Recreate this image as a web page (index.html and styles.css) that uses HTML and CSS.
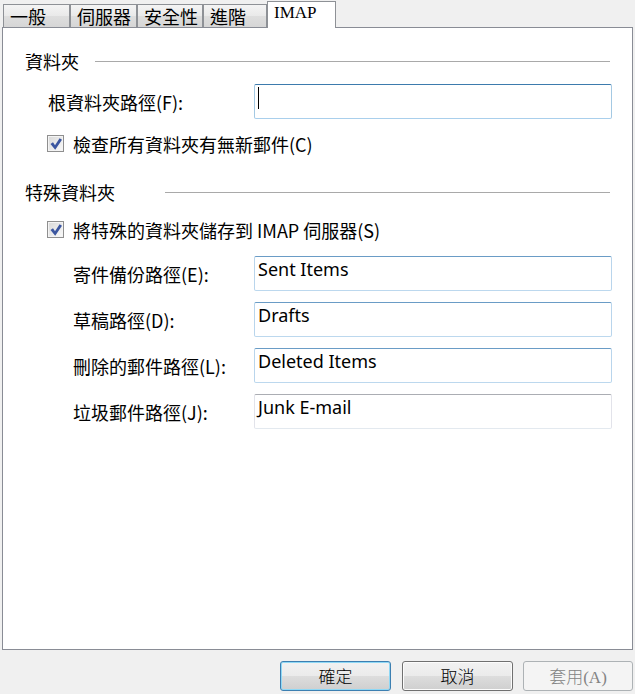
FILE: index.html
```html
<!DOCTYPE html>
<html lang="zh-Hant">
<head>
<meta charset="utf-8">
<title>IMAP</title>
<link rel="stylesheet" href="styles.css">
</head>
<body>
<div class="window">
  <div class="tabs">
    <div class="tab tab-1">一般</div>
    <div class="tab tab-2">伺服器</div>
    <div class="tab tab-3">安全性</div>
    <div class="tab tab-4">進階</div>
    <div class="tab tab-active">IMAP</div>
  </div>
  <div class="panel">
    <div class="group-head group-1"><span>資料夾</span><i class="rule"></i></div>
    <div class="field field-root">
      <span class="label">根資料夾路徑(F):</span>
      <div class="textbox focus"><span class="caret"></span></div>
    </div>
    <div class="check check-1">
      <span class="box"><svg width="14" height="14" viewBox="0 0 14 14"><path d="M1.5 7 L4 5.3 L6 8.3 L10.6 1.2 L13 2.8 L6.2 12.8 Z" fill="#3b56a0"/></svg></span>
      <span class="check-text">檢查所有資料夾有無新郵件(C)</span>
    </div>
    <div class="group-head group-2"><span>特殊資料夾</span><i class="rule"></i></div>
    <div class="check check-2">
      <span class="box"><svg width="14" height="14" viewBox="0 0 14 14"><path d="M1.5 7 L4 5.3 L6 8.3 L10.6 1.2 L13 2.8 L6.2 12.8 Z" fill="#3b56a0"/></svg></span>
      <span class="check-text">將特殊的資料夾儲存到 IMAP 伺服器(S)</span>
    </div>
    <div class="sub-fields">
      <div class="field sub">
        <span class="label">寄件備份路徑(E):</span>
        <div class="textbox hot">Sent Items</div>
      </div>
      <div class="field sub">
        <span class="label">草稿路徑(D):</span>
        <div class="textbox hot">Drafts</div>
      </div>
      <div class="field sub">
        <span class="label">刪除的郵件路徑(L):</span>
        <div class="textbox hot">Deleted Items</div>
      </div>
      <div class="field sub">
        <span class="label">垃圾郵件路徑(J):</span>
        <div class="textbox">Junk E-mail</div>
      </div>
    </div>
  </div>
  <div class="buttons">
    <div class="btn btn-default">確定</div>
    <div class="btn btn-cancel">取消</div>
    <div class="btn btn-disabled">套用<span class="latin">(A)</span></div>
  </div>
</div>
</body>
</html>
```
FILE: styles.css
```css
html, body {
  margin: 0;
  padding: 0;
}
body {
  background: #f0f0f0;
  font-family: "Noto Sans CJK TC", "Noto Sans", sans-serif;
  color: #000;
  width: 635px;
  height: 694px;
  overflow: hidden;
}
.window {
  width: 635px;
  height: 694px;
}

/* Tabs */
.tabs {
  display: flex;
  align-items: flex-end;
  height: 27px;
  padding-left: 3px;
}
.tab {
  box-sizing: border-box;
  height: 23px;
  border: 1px solid #8e9196;
  border-bottom: none;
  background: linear-gradient(#f4f4f4, #e9e9e9 50%, #dedede 51%, #d6d6d6);
  font-size: 18px;
  line-height: 20px;
  padding: 1px 0 0 6px;
  white-space: nowrap;
}
.tab-1 { width: 67px; }
.tab-2 { width: 67px; }
.tab-3 { width: 66px; }
.tab-4 { width: 64px; }
.tab-active {
  width: 69px;
  height: 27px;
  margin-bottom: -1px;
  background: #fff;
  position: relative;
  z-index: 1;
  font-family: "Liberation Serif", serif;
  font-size: 17px;
  line-height: 18px;
  padding: 2px 0 0 6px;
}

/* Panel */
.panel {
  box-sizing: border-box;
  width: 631px;
  height: 623px;
  margin-left: 2px;
  border: 1px solid #898c95;
  background: #fff;
  padding: 0 19px 0 22px;
  font-size: 18px;
}
.group-head {
  display: flex;
  align-items: center;
  height: 24px;
  line-height: 24px;
}
.group-1 { margin-top: 21px; }
.group-2 { margin-top: 24px; }
.rule {
  flex: 1;
  height: 1px;
  background: #a9a9a9;
  margin-right: 3px;
}
.group-1 .rule { margin-left: 16px; }
.group-2 .rule { margin-left: 50px; }

.field {
  display: flex;
  align-items: center;
  height: 35px;
}
.field-root { margin-top: 11px; }
.field-root .label {
  margin-left: 23px;
  width: 206px;
}
.sub-fields {
  margin-top: 14px;
  display: flex;
  flex-direction: column;
  gap: 11px;
}
.sub .label {
  margin-left: 48px;
  width: 181px;
}
.label {
  line-height: 24px;
  white-space: nowrap;
}

.textbox {
  box-sizing: border-box;
  width: 358px;
  height: 35px;
  border: 1px solid;
  border-color: #abadb3 #e2e3ea #e3e9ef #e2e3ea;
  border-radius: 2px;
  padding: 0 3px;
  font-family: "Noto Sans", sans-serif;
  font-size: 18px;
  line-height: 25px;
  white-space: nowrap;
  background: #fff;
}
.textbox.hot {
  border-color: #6a9cc6 #b9d5ec #bcd8ee #b9d5ec;
}
.textbox.focus {
  border-color: #3d7bad #a4c9e3 #a9cfec #a4c9e3;
}
.caret {
  display: block;
  width: 1px;
  height: 22px;
  margin-top: 2px;
  background: #000;
}

.check {
  display: flex;
  align-items: center;
  height: 24px;
  margin-left: 22px;
}
.check-1 { margin-top: 13px; }
.check-2 { margin-top: 14px; }
.box {
  box-sizing: border-box;
  width: 17px;
  height: 17px;
  border: 1px solid #8f8f8f;
  background: linear-gradient(135deg, #d8d8d8, #fafafa);
  box-shadow: inset 0 0 0 1px #f4f4f4;
  display: flex;
  align-items: center;
  justify-content: center;
  margin-right: 9px;
  margin-top: -1px;
}
.check-text {
  line-height: 24px;
  white-space: nowrap;
}

/* Buttons */
.buttons {
  display: flex;
  justify-content: flex-end;
  margin-top: 11px;
  padding-right: 2px;
}
.btn {
  box-sizing: border-box;
  height: 30px;
  width: 111px;
  border: 1px solid #707070;
  border-radius: 3px;
  background: linear-gradient(#f2f2f2, #ebebeb 50%, #dddddd 51%, #cfcfcf);
  box-shadow: inset 0 0 0 1px #fcfcfc;
  font-size: 17px;
  line-height: 27px;
  text-align: center;
  font-weight: 300;
}
.btn-default {
  border-color: #3c7fb1;
  box-shadow: inset 0 0 0 1px #8fd8f5;
}
.btn-cancel {
  margin-left: 11px;
}
.btn-disabled {
  width: 110px;
  margin-left: 10px;
  border-color: #adb2b5;
  background: #f4f4f4;
  box-shadow: none;
  color: #838383;
}
.latin {
  font-family: "Liberation Serif", serif;
  font-size: 17px;
}
```
